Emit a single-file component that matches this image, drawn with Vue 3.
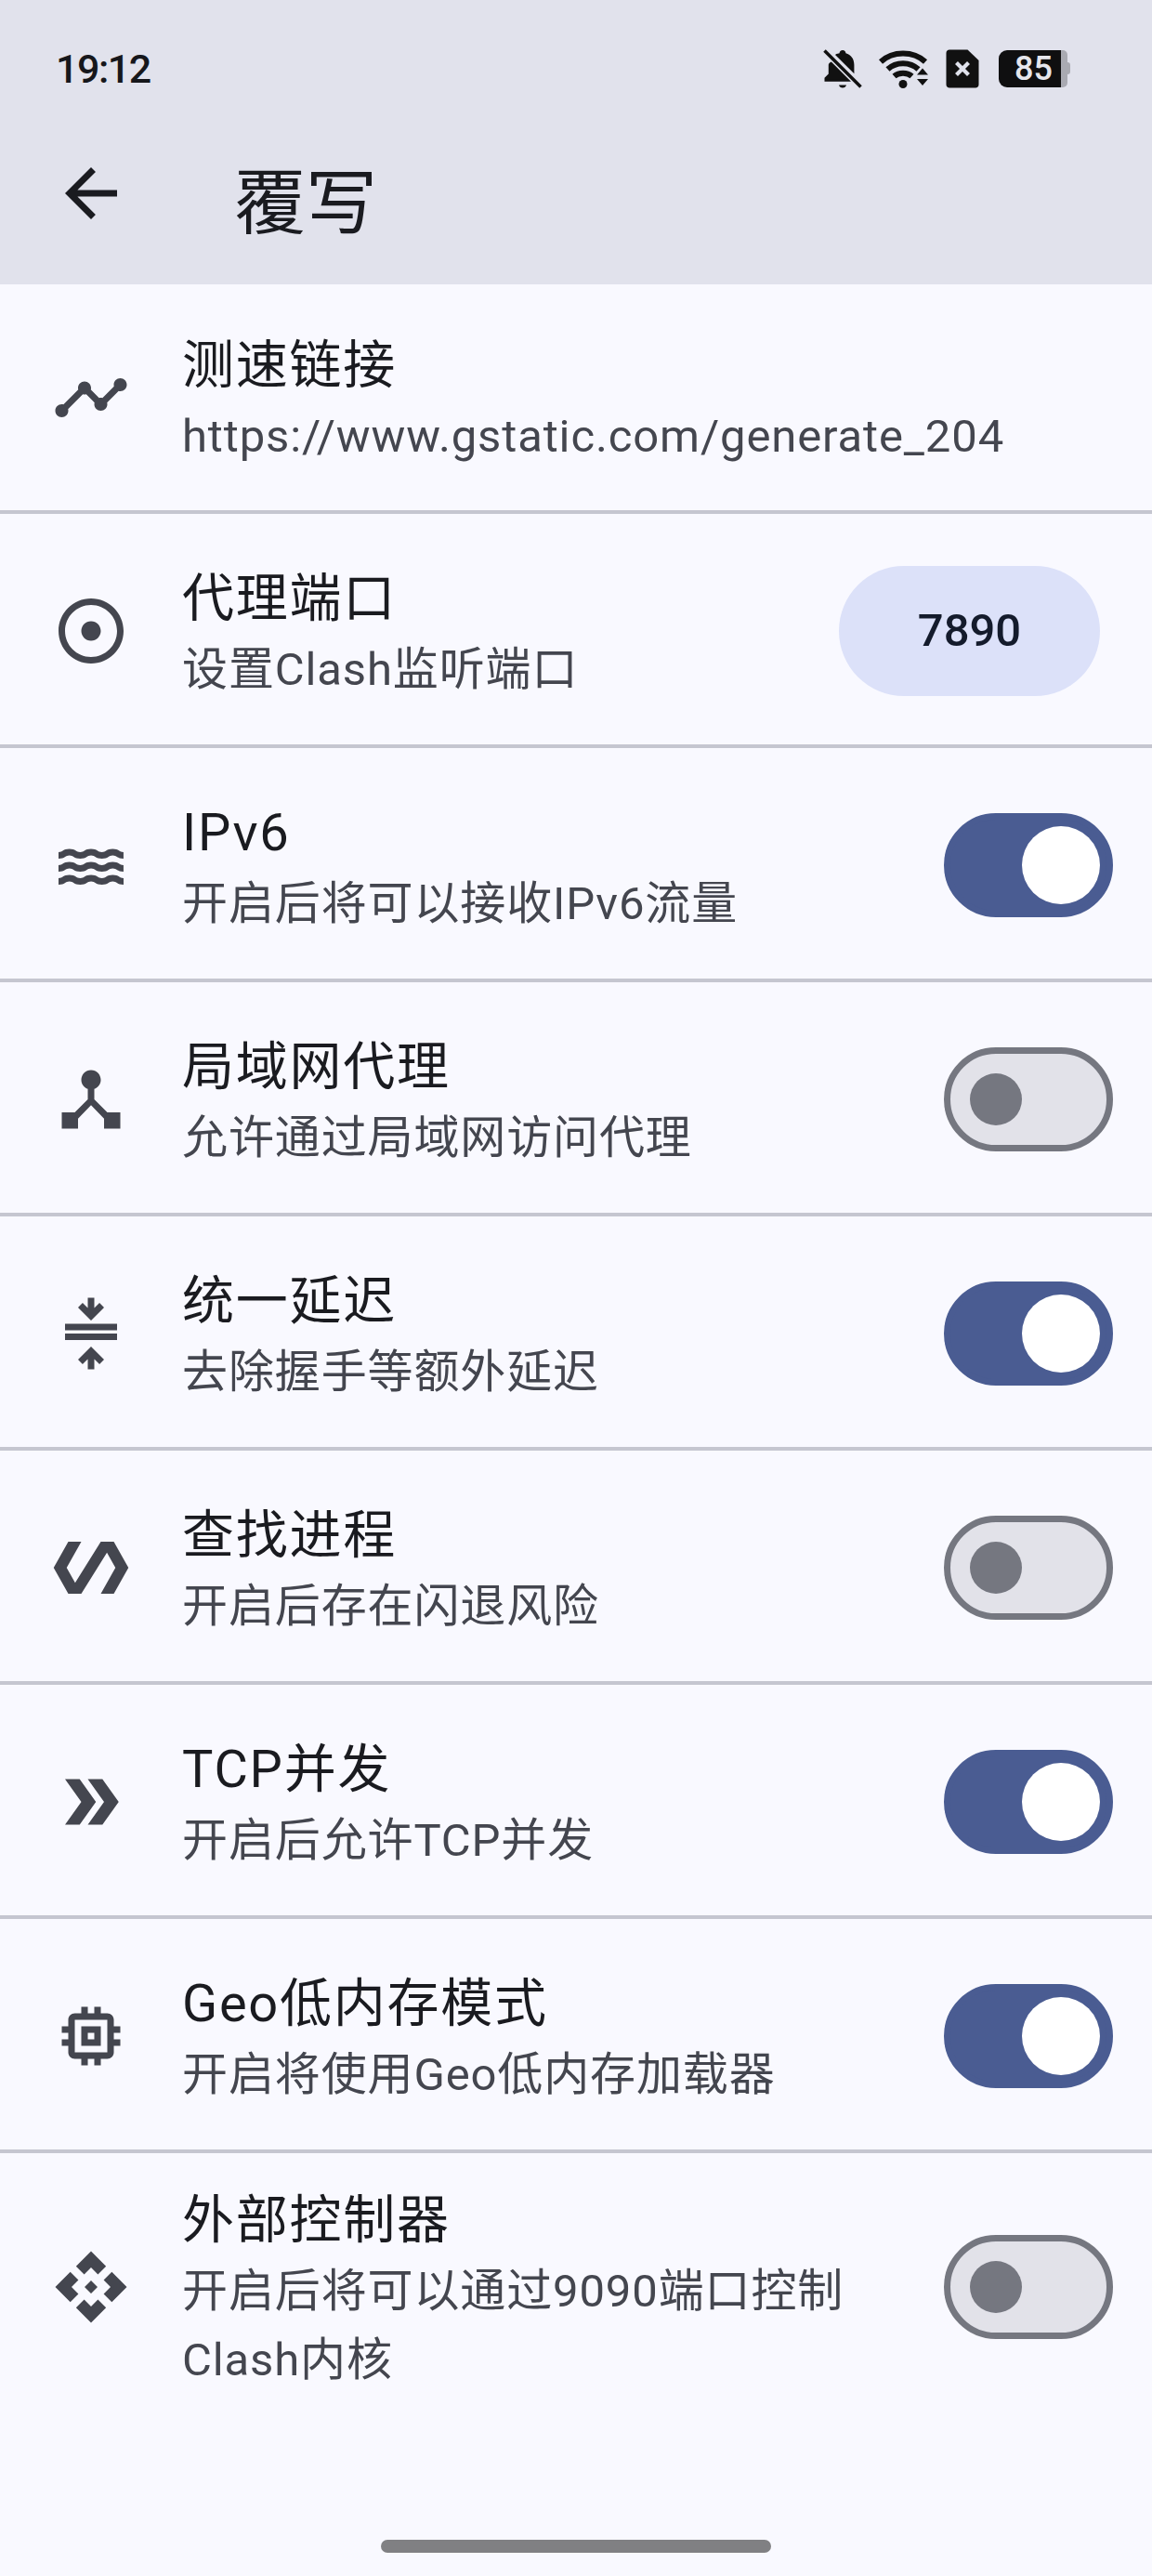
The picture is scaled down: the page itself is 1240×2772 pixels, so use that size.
<template>
  <div class="screen">
    <header class="top">
      <div class="status">
        <span class="time">19:12</span>
        <div class="status-icons">
          <svg class="bell" viewBox="0 0 42 42">
            <path d="M21 1c2 0 3.400 1.400 3.400 3.300 5.600 1.500 9 6 9 12.500v9.500L13 6c1.900-1.500 3.600-1.400 4.600-1.700C17.600 2.400 19 1 21 1zM8.800 13.500 30 34.700H1.500v-3.900l4.300-4.300v-9.700c0-1.300 1-2.300 3-3.300zM17 38.500h8c-.4 1.700-2.100 3-4 3s-3.600-1.300-4-3z" fill="#111" />
            <path d="M1.500 1.500 40.500 40.500" stroke="#111" stroke-width="3.600" />
          </svg>
          <svg class="wifi" viewBox="0 0 54 42">
            <path d="M2 13.500C15 1.500 37 1.500 50 13.500" fill="none" stroke="#111" stroke-width="6" />
            <path d="M9.500 21.500C18.500 13 33.500 13 42.500 21.500" fill="none" stroke="#111" stroke-width="6" />
            <path d="M16.500 29C21.500 24.500 30.500 24.500 35.500 29" fill="none" stroke="#111" stroke-width="6" />
            <circle cx="26" cy="37.500" r="4.500" fill="#111" />
            <path d="M41 27.500 47 20.500 53 27.500zM41 32h12l-6 7z" fill="#111" />
          </svg>
          <svg class="sim" viewBox="0 0 36 42">
            <path d="M4 0.500h19.500L35.500 12v26c0 2-1.500 3.500-3.500 3.500H4c-2 0-3.500-1.500-3.500-3.500V4C0.500 2 2 0.500 4 0.500z" fill="#111" />
            <path d="M11.500 14.500 24.500 27.500M24.500 14.500 11.500 27.500" stroke="#e0e2ec" stroke-width="4.200" />
          </svg>
          <div class="battery">
            <span class="battery-level">85</span>
            <span class="battery-rest"></span>
            <span class="battery-tip"></span>
          </div>
        </div>
      </div>
      <div class="bar">
        <svg class="back" viewBox="0 0 24 24">
          <path :d="backIcon" />
        </svg>
        <h1 class="title">覆写</h1>
      </div>
    </header>

    <ul class="list">
      <li v-for="item in items" :key="item.title" class="row">
        <svg class="icon" viewBox="0 0 24 24">
          <path :d="item.icon" />
        </svg>
        <div class="text">
          <div class="name">{{ item.title }}</div>
          <div class="desc">{{ item.desc }}</div>
        </div>
        <div v-if="item.value" class="pill">{{ item.value }}</div>
        <div v-else-if="item.on !== undefined" class="switch" :class="{ on: item.on }">
          <span class="thumb"></span>
        </div>
      </li>
    </ul>

    <div class="handle"></div>
  </div>
</template>

<script setup>
const backIcon = 'M20 11H7.83l5.59-5.59L12 4l-8 8 8 8 1.41-1.41L7.83 13H20v-2z'

const items = [
  {
    title: '测速链接',
    desc: 'https://www.gstatic.com/generate_204',
    icon: 'M23 8c0 1.100-.9 2-2 2-.18 0-.35-.02-.51-.07l-3.560 3.550c.05.16.07.34.07.52 0 1.100-.9 2-2 2s-2-.9-2-2c0-.18.02-.36.07-.52l-2.550-2.550c-.16.05-.34.07-.52.07s-.36-.02-.52-.07l-4.550 4.560c.05.16.07.33.07.51 0 1.100-.9 2-2 2s-2-.9-2-2 .9-2 2-2c.18 0 .35.02.51.07l4.560-4.550C8.020 9.360 8 9.180 8 9c0-1.100.9-2 2-2s2 .9 2 2c0 .18-.02.36-.07.52l2.550 2.550c.16-.05.34-.07.52-.07s.36.02.52.07l3.550-3.560C19.020 8.350 19 8.180 19 8c0-1.100.9-2 2-2s2 .9 2 2z',
  },
  {
    title: '代理端口',
    desc: '设置Clash监听端口',
    value: '7890',
    icon: 'M12 2C6.490 2 2 6.490 2 12s4.490 10 10 10 10-4.490 10-10S17.510 2 12 2zm0 18c-4.410 0-8-3.590-8-8s3.590-8 8-8 8 3.590 8 8-3.590 8-8 8zm3-8c0 1.660-1.340 3-3 3s-3-1.340-3-3 1.340-3 3-3 3 1.340 3 3z',
  },
  {
    title: 'IPv6',
    desc: '开启后将可以接收IPv6流量',
    on: true,
    icon: 'M21.980 14H22h-.02zM5.350 13c1.190 0 1.420 1 3.330 1 1.950 0 2.090-1 3.330-1 1.190 0 1.420 1 3.330 1 1.950 0 2.090-1 3.330-1 1.190 0 1.400.98 3.310 1v-2c-1.190 0-1.420-1-3.330-1-1.950 0-2.100 1-3.330 1-1.190 0-1.420-1-3.330-1-1.950 0-2.100 1-3.330 1-1.190 0-1.420-1-3.330-1-1.950 0-2.100 1-3.340 1v2c1.900 0 2.170-1 3.360-1zm13.320 2c-1.950 0-2.090 1-3.330 1-1.190 0-1.420-1-3.330-1-1.950 0-2.100 1-3.340 1-1.240 0-1.380-1-3.330-1-1.950 0-2.100 1-3.340 1v2c1.950 0 2.110-1 3.340-1 1.240 0 1.380 1 3.330 1 1.950 0 2.100-1 3.340-1 1.190 0 1.420 1 3.330 1 1.940 0 2.090-1 3.330-1 1.190 0 1.420 1 3.330 1v-2c-1.240 0-1.380-1-3.330-1zM5.350 9c1.190 0 1.420 1 3.330 1 1.950 0 2.090-1 3.330-1 1.190 0 1.420 1 3.330 1 1.950 0 2.090-1 3.330-1 1.190 0 1.400.98 3.310 1V8c-1.190 0-1.420-1-3.330-1-1.950 0-2.100 1-3.330 1-1.190 0-1.420-1-3.330-1-1.950 0-2.100 1-3.330 1-1.190 0-1.420-1-3.330-1C3.380 7 3.240 8 2 8v2c1.900 0 2.170-1 3.350-1z',
  },
  {
    title: '局域网代理',
    desc: '允许通过局域网访问代理',
    on: false,
    icon: 'M17 16l-4-4V8.820C14.160 8.400 15 7.300 15 6c0-1.660-1.340-3-3-3S9 4.340 9 6c0 1.300.84 2.400 2 2.820V12l-4 4H3v5h5v-3.050l4-4.200 4 4.200V21h5v-5h-4z',
  },
  {
    title: '统一延迟',
    desc: '去除握手等额外延迟',
    on: true,
    icon: 'M4 9v2h16V9H4zm12-5l-1.410-1.410L13 4.170V1h-2v3.170L9.410 2.590 8 4l4 4 4-4zM4 14h16v-2H4v2zm4 6l1.410 1.410L11 19.830V23h2v-3.170l1.590 1.580L16 20l-4-4-4 4z',
  },
  {
    title: '查找进程',
    desc: '开启后存在闪退风险',
    on: false,
    icon: 'M19 4h-4L7.110 16.630 4.500 12 9 4H5L.5 12 5 20h4l7.890-12.630L19.500 12 15 20h4l4.500-8L19 4z',
  },
  {
    title: 'TCP并发',
    desc: '开启后允许TCP并发',
    on: true,
    icon: 'M15.500 5H11l5 7-5 7h4.500l5-7zM8.500 5H4l5 7-5 7h4.500l5-7z',
  },
  {
    title: 'Geo低内存模式',
    desc: '开启将使用Geo低内存加载器',
    on: true,
    icon: 'M15 9H9v6h6V9zm-2 4h-2v-2h2v2zm8-2V9h-2V7c0-1.100-.9-2-2-2h-2V3h-2v2h-2V3H9v2H7c-1.100 0-2 .9-2 2v2H3v2h2v2H3v2h2v2c0 1.100.9 2 2 2h2v2h2v-2h2v2h2v-2h2c1.100 0 2-.9 2-2v-2h2v-2h-2v-2h2zm-4 6H7V7h10v10z',
  },
  {
    title: '外部控制器',
    desc: '开启后将可以通过9090端口控制Clash内核',
    on: false,
    icon: 'M14 12l-2 2-2-2 2-2 2 2zm-2-6l2.120 2.120 2.500-2.500L12 1 7.380 5.620l2.500 2.500L12 6zm-6 6l2.120-2.120-2.500-2.500L1 12l4.620 4.620 2.500-2.500L6 12zm12 0l-2.120 2.120 2.500 2.500L23 12l-4.620-4.620-2.500 2.500L18 12zm-6 6l-2.120-2.120-2.500 2.500L12 23l4.620-4.620-2.500-2.500L12 18z',
  },
]
</script>

<style scoped>
.screen {
  position: relative;
  width: 1240px;
  height: 2772px;
  overflow: hidden;
  background: #f9f9ff;
  color: #1a1b20;
  font-family: Roboto, "Noto Sans CJK SC", sans-serif;
}

.top {
  height: 306px;
  background: #e1e2ec;
}

.status {
  box-sizing: border-box;
  height: 96px;
  padding: 52px 88px 0 60px;
  display: flex;
  align-items: center;
  justify-content: space-between;
}

.time {
  font-size: 43px;
  font-weight: 500;
  letter-spacing: -1.500px;
  color: #16171b;
}

.status-icons {
  display: flex;
  align-items: center;
  gap: 18px;
}

.bell {
  width: 42px;
  height: 42px;
}

.wifi {
  width: 54px;
  height: 42px;
}

.sim {
  width: 36px;
  height: 42px;
}

.battery {
  display: flex;
  width: 77px;
  height: 40px;
  margin-left: 3px;
}

.battery-level {
  box-sizing: border-box;
  width: 67px;
  padding-right: 9px;
  border-radius: 9px 0 0 9px;
  background: #0f0f10;
  color: #e6e6ec;
  font-size: 36px;
  font-weight: 500;
  line-height: 40px;
  text-align: right;
}

.battery-rest {
  width: 7px;
  border-radius: 0 5px 5px 0;
  background: #a9aab2;
}

.battery-tip {
  width: 3px;
  height: 13px;
  margin-top: 13px;
  border-radius: 0 3px 3px 0;
  background: #a9aab2;
}

.bar {
  box-sizing: border-box;
  height: 210px;
  padding-top: 14px;
  display: flex;
  align-items: center;
}

.back {
  width: 84px;
  height: 84px;
  margin-left: 56px;
  fill: #1a1b20;
}

.title {
  margin: 24px 0 0 112px;
  font-size: 77px;
  font-weight: 400;
  line-height: 1.2;
}

.list {
  margin: 0;
  padding: 0;
  list-style: none;
}

.row {
  display: flex;
  align-items: center;
  box-sizing: border-box;
  min-height: 252px;
  padding: 4px 56px 0;
  border-bottom: 4px solid #c5c6d0;
}

.row:first-child {
  min-height: 247px;
  padding-top: 0;
}

.row:last-child {
  min-height: 288px;
  padding-top: 0;
  border-bottom: 0;
}

.icon {
  flex: none;
  width: 84px;
  height: 84px;
  margin-right: 56px;
  fill: #44464f;
}

.text {
  flex: 1;
  min-width: 0;
  padding-top: 4px;
}

.name {
  font-size: 56px;
  line-height: 80px;
  letter-spacing: 1.750px;
}

.desc {
  font-size: 49px;
  line-height: 74px;
  letter-spacing: 0.875px;
  color: #44464f;
}

.pill {
  flex: none;
  width: 281px;
  height: 140px;
  margin-left: 56px;
  border-radius: 70px;
  background: #dce1f9;
  color: #141b2c;
  font-size: 49px;
  font-weight: 500;
  line-height: 140px;
  text-align: center;
}

.switch {
  flex: none;
  display: flex;
  align-items: center;
  box-sizing: border-box;
  width: 182px;
  height: 112px;
  margin: 0 -14px 0 56px;
  padding-left: 21px;
  border: 7px solid #757780;
  border-radius: 56px;
  background: #e2e2e9;
}

.thumb {
  width: 56px;
  height: 56px;
  border-radius: 50%;
  background: #757780;
}

.switch.on {
  justify-content: flex-end;
  padding: 0 7px 0 0;
  border-color: #4a5c92;
  background: #4a5c92;
}

.switch.on .thumb {
  width: 84px;
  height: 84px;
  background: #fff;
}

.handle {
  position: absolute;
  left: 410px;
  bottom: 25px;
  width: 420px;
  height: 14px;
  border-radius: 7px;
  background: #808083;
}
</style>

<style>
body {
  background: #f9f9ff;
}
</style>
